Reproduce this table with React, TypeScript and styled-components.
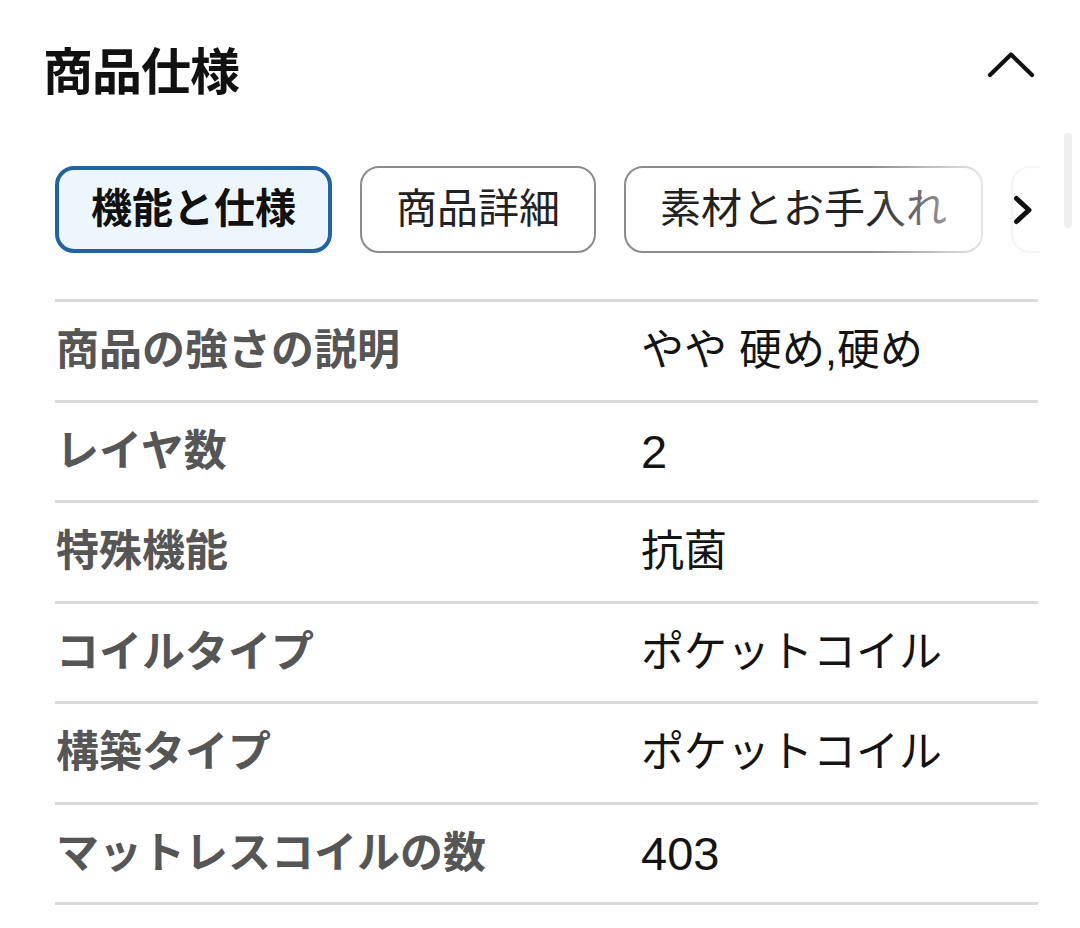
import React from "react";
import styled, { createGlobalStyle } from "styled-components";

const GlobalStyle = createGlobalStyle`
  html, body {
    margin: 0;
    padding: 0;
    background: #ffffff;
  }
  body {
    font-family: "Liberation Sans", "Noto Sans CJK JP", sans-serif;
    color: #111111;
  }
  * { box-sizing: border-box; }
`;

const Page = styled.div`
  position: relative;
  width: 1080px;
  min-height: 928px;
  background: #ffffff;
  overflow: hidden;
`;

const Header = styled.header`
  display: flex;
  align-items: center;
  justify-content: space-between;
  height: 145px;
  padding: 0 45px 0 43px;
`;

const Title = styled.h2`
  margin: 0;
  font-size: 50px;
  line-height: 1;
  font-weight: 700;
  color: #111111;
  letter-spacing: -1px;
`;

const CollapseButton = styled.button`
  align-self: flex-start;
  margin-top: 50px;
  width: 50px;
  height: 30px;
  padding: 0;
  border: none;
  background: transparent;
  display: block;
  cursor: pointer;
`;

const Body = styled.div`
  padding: 21px 40px 0 55px;
`;

const TabStrip = styled.div`
  position: relative;
  height: 87px;
  overflow: hidden;
`;

const TabTrack = styled.div`
  display: flex;
  gap: 28px;
  height: 100%;
`;

const Tab = styled.button<{ $active?: boolean }>`
  flex-shrink: 0;
  display: inline-flex;
  align-items: center;
  height: 87px;
  margin: 0;
  padding: 0 ${(p) => (p.$active ? 32 : 34)}px;
  border-radius: 19px;
  border: ${(p) => (p.$active ? "4px solid #2263a4" : "2px solid #8c8c8c")};
  background: ${(p) => (p.$active ? "#edf6fd" : "#ffffff")};
  font-family: "Liberation Sans", "Noto Sans CJK JP", sans-serif;
  font-size: 41px;
  line-height: 1;
  font-weight: ${(p) => (p.$active ? 700 : 400)};
  color: ${(p) => (p.$active ? "#111111" : "#222222")};
  white-space: nowrap;
  cursor: pointer;
`;

const TabFade = styled.div`
  position: absolute;
  top: 0;
  right: 0;
  bottom: 0;
  width: 170px;
  display: flex;
  align-items: center;
  justify-content: flex-end;
  padding-right: 6px;
  background: linear-gradient(
    to right,
    rgba(255, 255, 255, 0) 0%,
    rgba(255, 255, 255, 0.55) 45%,
    rgba(255, 255, 255, 0.9) 78%,
    rgba(255, 255, 255, 0.93) 100%
  );
  pointer-events: none;
`;

const SpecTable = styled.div`
  margin-top: 46px;
  margin-right: 2px;
  border-top: 3px solid #dadada;
`;

const SpecRow = styled.div`
  display: grid;
  grid-template-columns: 586px 1fr;
  align-items: center;
  height: 100.5px;
  border-bottom: 3px solid #dadada;
`;

const SpecLabel = styled.div`
  padding-left: 1px;
  font-size: 43px;
  line-height: 1;
  font-weight: 700;
  color: #565656;
  white-space: nowrap;
`;

const SpecValue = styled.div<{ $numeric?: boolean }>`
  font-family: "Liberation Sans", "Noto Sans CJK JP", sans-serif;
  font-size: ${(p) => (p.$numeric ? 47 : 43)}px;
  line-height: 1;
  font-weight: 400;
  color: #141414;
  white-space: nowrap;
`;

const ScrollIndicator = styled.div`
  position: absolute;
  top: 133px;
  right: 8px;
  width: 8px;
  height: 95px;
  border-radius: 4px;
  background: #efefef;
`;

const tabs = ["機能と仕様", "商品詳細", "素材とお手入れ", "サイズ"];

const specs: [string, string][] = [
  ["商品の強さの説明", "やや 硬め,硬め"],
  ["レイヤ数", "2"],
  ["特殊機能", "抗菌"],
  ["コイルタイプ", "ポケットコイル"],
  ["構築タイプ", "ポケットコイル"],
  ["マットレスコイルの数", "403"],
];

export default function App() {
  return (
    <>
      <GlobalStyle />
      <Page>
        <Header>
          <Title>商品仕様</Title>
          <CollapseButton aria-label="閉じる">
            <svg width="50" height="30" viewBox="0 0 50 30" fill="none">
              <path
                d="M5 25 L26 4.5 L47 25"
                stroke="#111"
                strokeWidth="4.2"
                strokeLinecap="round"
                strokeLinejoin="round"
              />
            </svg>
          </CollapseButton>
        </Header>
        <Body>
          <TabStrip>
            <TabTrack>
              {tabs.map((t, i) => (
                <Tab key={t} $active={i === 0}>
                  {t}
                </Tab>
              ))}
            </TabTrack>
            <TabFade>
              <svg width="22" height="30" viewBox="0 0 22 30" fill="none">
                <path
                  d="M4.5 3.5 L17 15 L4.5 26.5"
                  stroke="#111"
                  strokeWidth="5"
                  strokeLinecap="round"
                  strokeLinejoin="round"
                />
              </svg>
            </TabFade>
          </TabStrip>
          <SpecTable>
            {specs.map(([k, v]) => (
              <SpecRow key={k}>
                <SpecLabel>{k}</SpecLabel>
                <SpecValue $numeric={/^\d+$/.test(v)}>{v}</SpecValue>
              </SpecRow>
            ))}
          </SpecTable>
        </Body>
        <ScrollIndicator />
      </Page>
    </>
  );
}
